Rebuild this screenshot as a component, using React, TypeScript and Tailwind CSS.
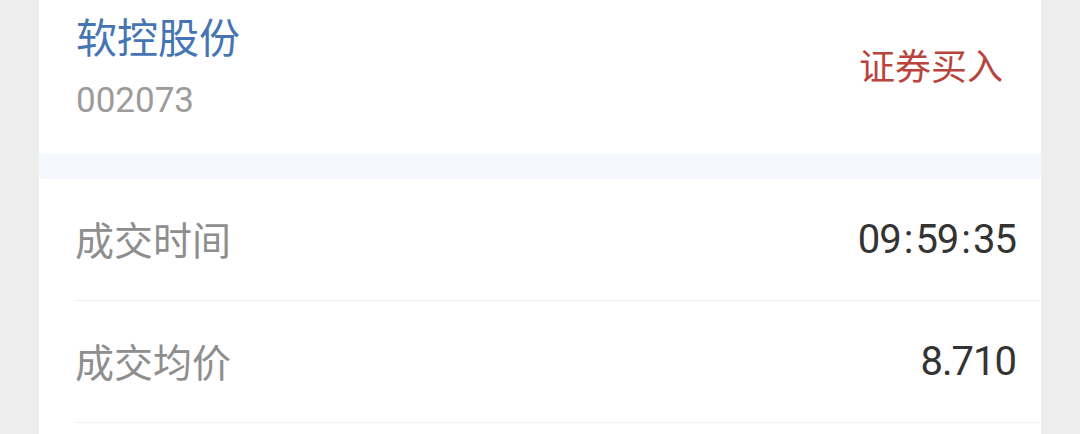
import { FC } from "react";

const rows = [
  { label: "成交时间", value: "09:59:35" },
  { label: "成交均价", value: "8.710" },
];

// colons in the reference font sit further apart than Roboto's
const Value: FC<{ text: string }> = ({ text }) => (
  <span className="text-[40px] leading-[48px] tracking-[-1px] text-[#333333] font-['Roboto',sans-serif]">
    {text.split(/(:)/).map((part, i) =>
      part === ":" ? (
        <span key={i} className="mx-[3px]">
          :
        </span>
      ) : (
        <span key={i}>{part}</span>
      )
    )}
  </span>
);

const DetailRow: FC<{ label: string; value: string }> = ({ label, value }) => {
  return (
    <div className="flex h-[122px] items-center justify-between border-b border-[#f1f1f1] ml-[36px] pr-[25px]">
      <span className="-mt-[3px] text-[39px] leading-[48px] text-[#8e8e8e] font-['Noto_Sans_CJK_SC',sans-serif]">
        {label}
      </span>
      <Value text={value} />
    </div>
  );
};

const App: FC = () => {
  return (
    <div className="flex h-[434px] w-[1080px] justify-center overflow-hidden bg-[#ededed]">
      <div className="w-[1002px] bg-white">
        <div className="flex h-[154px] justify-between pl-[37px] pr-[38px]">
          <div className="flex flex-col pt-[11px]">
            <span className="text-[41px] leading-[48px] text-[#4675b4] font-['Noto_Sans_CJK_SC',sans-serif]">
              软控股份
            </span>
            <span className="mt-[22px] text-[35px] leading-[40px] text-[#9c9c9c] font-['Roboto',sans-serif]">
              002073
            </span>
          </div>
          <span className="mt-[42px] text-[36px] leading-[44px] text-[#b9433d] font-['Noto_Sans_CJK_SC',sans-serif]">
            证券买入
          </span>
        </div>
        <div className="h-[25px] bg-[#f5f9fd]" />
        {rows.map((r) => (
          <DetailRow key={r.label} label={r.label} value={r.value} />
        ))}
      </div>
    </div>
  );
};

export default App;
